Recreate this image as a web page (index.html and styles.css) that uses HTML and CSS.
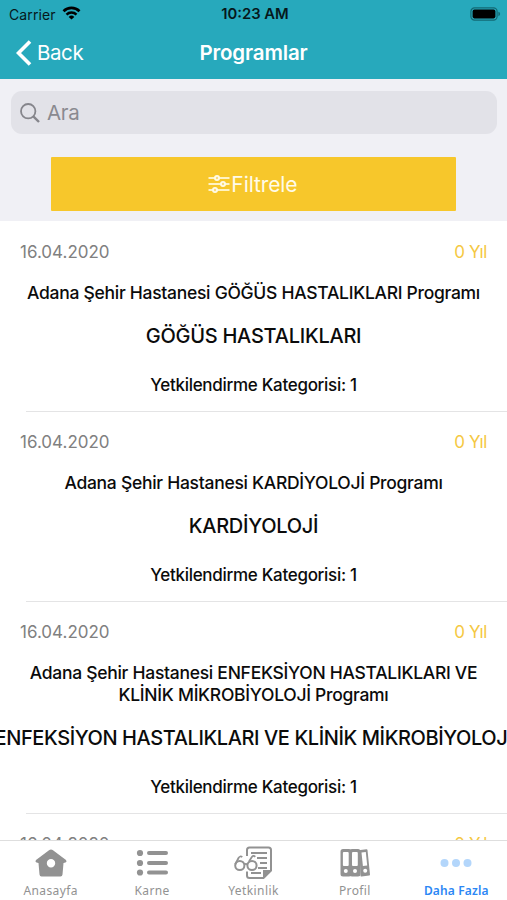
FILE: index.html
```html
<!DOCTYPE html>
<html lang="tr">
<head>
  <meta charset="UTF-8" />
  <meta name="viewport" content="width=device-width, initial-scale=1.0" />
  <title>Programlar</title>
  <link rel="stylesheet" href="styles.css">
</head>
<body>
  <header>
    <div class="status-bar">
      <div class="carrier">
        <span>Carrier</span>
        <svg width="19" height="14" viewBox="0 0 18 14">
          <path d="M1 5.2a11.5 11.5 0 0 1 16 0" fill="none" stroke="#000" stroke-width="2.7" />
          <path d="M4 8.6a7.2 7.2 0 0 1 10 0" fill="none" stroke="#000" stroke-width="2.5" />
          <path d="M9 13.6L6.2 10.9a4 4 0 0 1 5.6 0z" />
        </svg>
      </div>
      <div class="time">10:23 AM</div>
      <div class="battery">
        <svg width="31" height="14" viewBox="0 0 31 14">
          <rect x="0.9" y="0.9" width="26.2" height="12.2" rx="3.6" fill="none" stroke="#136974" stroke-width="1.2" />
          <rect x="2.6" y="2.6" width="22.8" height="8.8" rx="1.8" />
          <path d="M28.4 4.8q1.7 .6 1.7 2.2t-1.7 2.2z" fill="#136974" />
        </svg>
      </div>
    </div>
    <div class="nav-bar">
      <div class="back">
        <svg width="16" height="26" viewBox="0 0 16 26">
          <path d="M14 1.5L2.5 13L14 24.5" fill="none" stroke="#fff" stroke-width="3.6" />
        </svg>
        <span>Back</span>
      </div>
      <h1>Programlar</h1>
    </div>
  </header>

  <div class="tools">
    <div class="search">
      <svg width="20" height="20" viewBox="0 0 20 20">
        <circle cx="8.2" cy="8.2" r="7.2" fill="none" stroke="#85858b" stroke-width="1.8" />
        <path d="M13.3 13.3L19 19" stroke="#85858b" stroke-width="2.4" />
      </svg>
      <span>Ara</span>
    </div>
    <div class="filter-button">
      <svg width="22" height="18" viewBox="0 0 22 18">
        <path d="M0.5 3h21M0.5 9h21M0.5 15h21" stroke="#fff3c4" stroke-width="2.2" />
        <g fill="#f9dc7a" stroke="#fffbe9" stroke-width="1.8">
          <circle cx="9" cy="3" r="2.1" />
          <circle cx="15" cy="9" r="2.1" />
          <circle cx="7" cy="15" r="2.1" />
        </g>
      </svg>
      <span>Filtrele</span>
    </div>
  </div>

  <main>
    <div class="program">
      <div class="top-line"><span class="date">16.04.2020</span><span class="year">0 Yıl</span></div>
      <div class="name">Adana Şehir Hastanesi GÖĞÜS HASTALIKLARI Programı</div>
      <div class="branch"><span>GÖĞÜS HASTALIKLARI</span></div>
      <div class="category">Yetkilendirme Kategorisi: 1</div>
    </div>
    <div class="program">
      <div class="top-line"><span class="date">16.04.2020</span><span class="year">0 Yıl</span></div>
      <div class="name">Adana Şehir Hastanesi KARDİYOLOJİ Programı</div>
      <div class="branch"><span>KARDİYOLOJİ</span></div>
      <div class="category">Yetkilendirme Kategorisi: 1</div>
    </div>
    <div class="program">
      <div class="top-line"><span class="date">16.04.2020</span><span class="year">0 Yıl</span></div>
      <div class="name">Adana Şehir Hastanesi ENFEKSİYON HASTALIKLARI VE<br>KLİNİK MİKROBİYOLOJİ Programı</div>
      <div class="branch long"><span>ENFEKSİYON HASTALIKLARI VE KLİNİK MİKROBİYOLOJİ</span></div>
      <div class="category">Yetkilendirme Kategorisi: 1</div>
    </div>
    <div class="program">
      <div class="top-line"><span class="date">16.04.2020</span><span class="year">0 Yıl</span></div>
    </div>
  </main>

  <footer>
    <div class="tab">
      <svg width="34" height="34" viewBox="0 0 34 34">
        <path fill-rule="evenodd" d="M17 3.5q1 0 2 .8L32 14q1.4 1.6-.5 2.5L29.5 17l-1 11.5q-.2 2-2 2h-19q-1.800 0-2-2L4.500 17l-2-.5Q.6 15.600 2 14L15 4.300q1-.8 2-.8zM17 13a4.200 4.200 0 1 0 0 8.400a4.200 4.200 0 1 0 0-8.400z" />
      </svg>
      <span>Anasayfa</span>
    </div>
    <div class="tab">
      <svg width="34" height="34" viewBox="0 0 34 34">
        <circle cx="5" cy="7" r="3.1" /><circle cx="5" cy="17" r="3.1" /><circle cx="5" cy="26.5" r="3.1" />
        <path d="M14 7h17M14 17h17M14 26.5h17" stroke="#929292" stroke-width="4" stroke-linecap="round" />
      </svg>
      <span>Karne</span>
    </div>
    <div class="tab">
      <svg width="40" height="34" viewBox="0 0 40 34">
        <g fill="none" stroke="#929292" stroke-width="2">
          <path d="M14 10V4q0-2.500 2.500-2.500h19Q38 1.500 38 4v20.500L30.500 32h-14Q14 32 14 29.500V25.500" />
          <path d="M18 7h16M24 12h10M27 17h7M25 22h9M18 27h10" stroke-width="1.8" />
          <circle cx="6.8" cy="19.5" r="4.6" />
          <circle cx="19" cy="19.5" r="4.6" />
          <path d="M11.300 18.500q1.600-1.200 3.200 0M2.200 18.500L5.500 12q1.500-2.500 3.800-1M16 15.500L18.800 11q1.800-2 3.400-.2" stroke-width="1.8" />
        </g>
        <path d="M30 32v-8h8z" />
      </svg>
      <span>Yetkinlik</span>
    </div>
    <div class="tab">
      <svg width="34" height="34" viewBox="0 0 34 34">
        <g stroke="#929292" stroke-width="2" stroke-linejoin="round">
          <rect x="3.500" y="4" width="9" height="25.500" rx="1.5" />
          <rect x="12.5" y="4" width="9" height="25.5" rx="1.5" />
          <path d="M22.500 5l6-.8L31 28.500l-7.500 1z" />
        </g>
        <g fill="#fff">
          <rect x="4.9" y="6" width="5.8" height="14" rx="1" />
          <rect x="14" y="6" width="5.8" height="14" rx="1" />
          <path d="M23.500 6.500l4.300-.6L29.200 19.500l-4.300 .5z" />
          <circle cx="7.8" cy="25" r="2" /><circle cx="17" cy="25" r="2" /><circle cx="27.2" cy="24.800" r="2" />
        </g>
      </svg>
      <span>Profil</span>
    </div>
    <div class="tab active">
      <svg width="34" height="34" viewBox="0 0 34 34">
        <circle cx="5.5" cy="17" r="4" /><circle cx="17" cy="17" r="4" /><circle cx="28.5" cy="17" r="4" />
      </svg>
      <span>Daha Fazla</span>
    </div>
  </footer>
</body>
</html>
```

FILE: styles.css
```css
* {
  box-sizing: border-box;
}

body {
  margin: 0;
  height: 900px;
  display: flex;
  flex-direction: column;
  overflow: hidden;
  font-family: Inter, "Liberation Sans", sans-serif;
  background: #fff;
  color: #0b0b0b;
}

svg {
  display: block;
  flex: none;
}

header {
  height: 79px;
  flex: none;
  background: #27a9bc;
}

.status-bar {
  height: 27px;
  display: grid;
  grid-template-columns: 1fr auto 1fr;
  align-items: center;
  padding: 0 6px 0 9px;
  font-size: 14px;
  line-height: 27px;
  color: #06181b;
}

.carrier {
  display: flex;
  align-items: center;
  gap: 6px;
  letter-spacing: 0.1px;
}

.carrier svg {
  margin-top: -2px;
}

.time {
  padding-top: 1px;
  font-size: 14.8px;
  font-weight: 600;
}

.battery {
  display: flex;
  justify-content: flex-end;
}

.nav-bar {
  height: 52px;
  display: grid;
  grid-template-columns: 1fr auto 1fr;
  align-items: center;
  padding: 0 16px;
  color: #fff;
}

.back {
  display: flex;
  align-items: center;
  gap: 5px;
  font-size: 20.5px;
  letter-spacing: -0.4px;
}

.back span,
h1 {
  padding-bottom: 2px;
}

h1 {
  margin: 0;
  font-size: 20.5px;
  font-weight: 600;
  letter-spacing: -0.15px;
}

.tools {
  height: 142px;
  flex: none;
  padding: 12px 10px 10px 11px;
  background: #f0f0f5;
}

.search {
  height: 43px;
  display: flex;
  align-items: center;
  gap: 7px;
  padding-left: 9px;
  border-radius: 11px;
  background: #e2e2e8;
  color: #8a8a90;
  font-size: 20.5px;
  letter-spacing: -0.3px;
}

.filter-button {
  height: 54px;
  margin: 23px 40.6px 0 40.4px;
  padding-right: 2px;
  display: flex;
  align-items: center;
  justify-content: center;
  gap: 1px;
  border-radius: 1px;
  background: #f7c72b;
  color: #fffbe9;
  font-size: 21px;
  letter-spacing: -0.1px;
}

main {
  flex: 1;
  min-height: 0;
  overflow: hidden;
}

.program {
  position: relative;
  padding-top: 20px;
  height: 190px;
  text-align: center;
}

.program:nth-child(3) {
  height: 212px;
}

.program::after {
  content: "";
  position: absolute;
  left: 26px;
  right: 0;
  bottom: -1px;
  height: 1px;
  background: #e4e4e5;
}

.top-line {
  display: flex;
  justify-content: space-between;
  padding: 0 20px;
  font-size: 17px;
  line-height: 22px;
}

.date {
  color: #808080;
}

.year {
  color: #f5c842;
  letter-spacing: -0.4px;
}

.name {
  margin-top: 19px;
  font-size: 17.5px;
  font-weight: 500;
  line-height: 22px;
  letter-spacing: -0.28px;
  white-space: nowrap;
}

.branch {
  display: flex;
  justify-content: center;
  margin-top: 18px;
  font-size: 20px;
  font-weight: 500;
  line-height: 28px;
  letter-spacing: -0.25px;
  white-space: nowrap;
}

.branch.long {
  letter-spacing: -0.4px;
}

.category {
  margin-top: 24px;
  font-size: 17px;
  font-weight: 500;
  line-height: 22px;
  letter-spacing: -0.3px;
}

footer {
  height: 60px;
  flex: none;
  display: grid;
  grid-template-columns: repeat(5, 1fr);
  border-top: 1px solid #dedede;
  background: #fff;
}

.tab {
  display: flex;
  flex-direction: column;
  align-items: center;
  padding-top: 5px;
  fill: #929292;
  color: #929292;
  font-family: "Noto Sans", sans-serif;
  font-size: 12px;
  line-height: 22px;
  letter-spacing: 0.4px;
}

.tab.active {
  fill: #b3d6fb;
  color: #2b87f5;
  font-weight: 600;
  letter-spacing: 0.15px;
}
```
